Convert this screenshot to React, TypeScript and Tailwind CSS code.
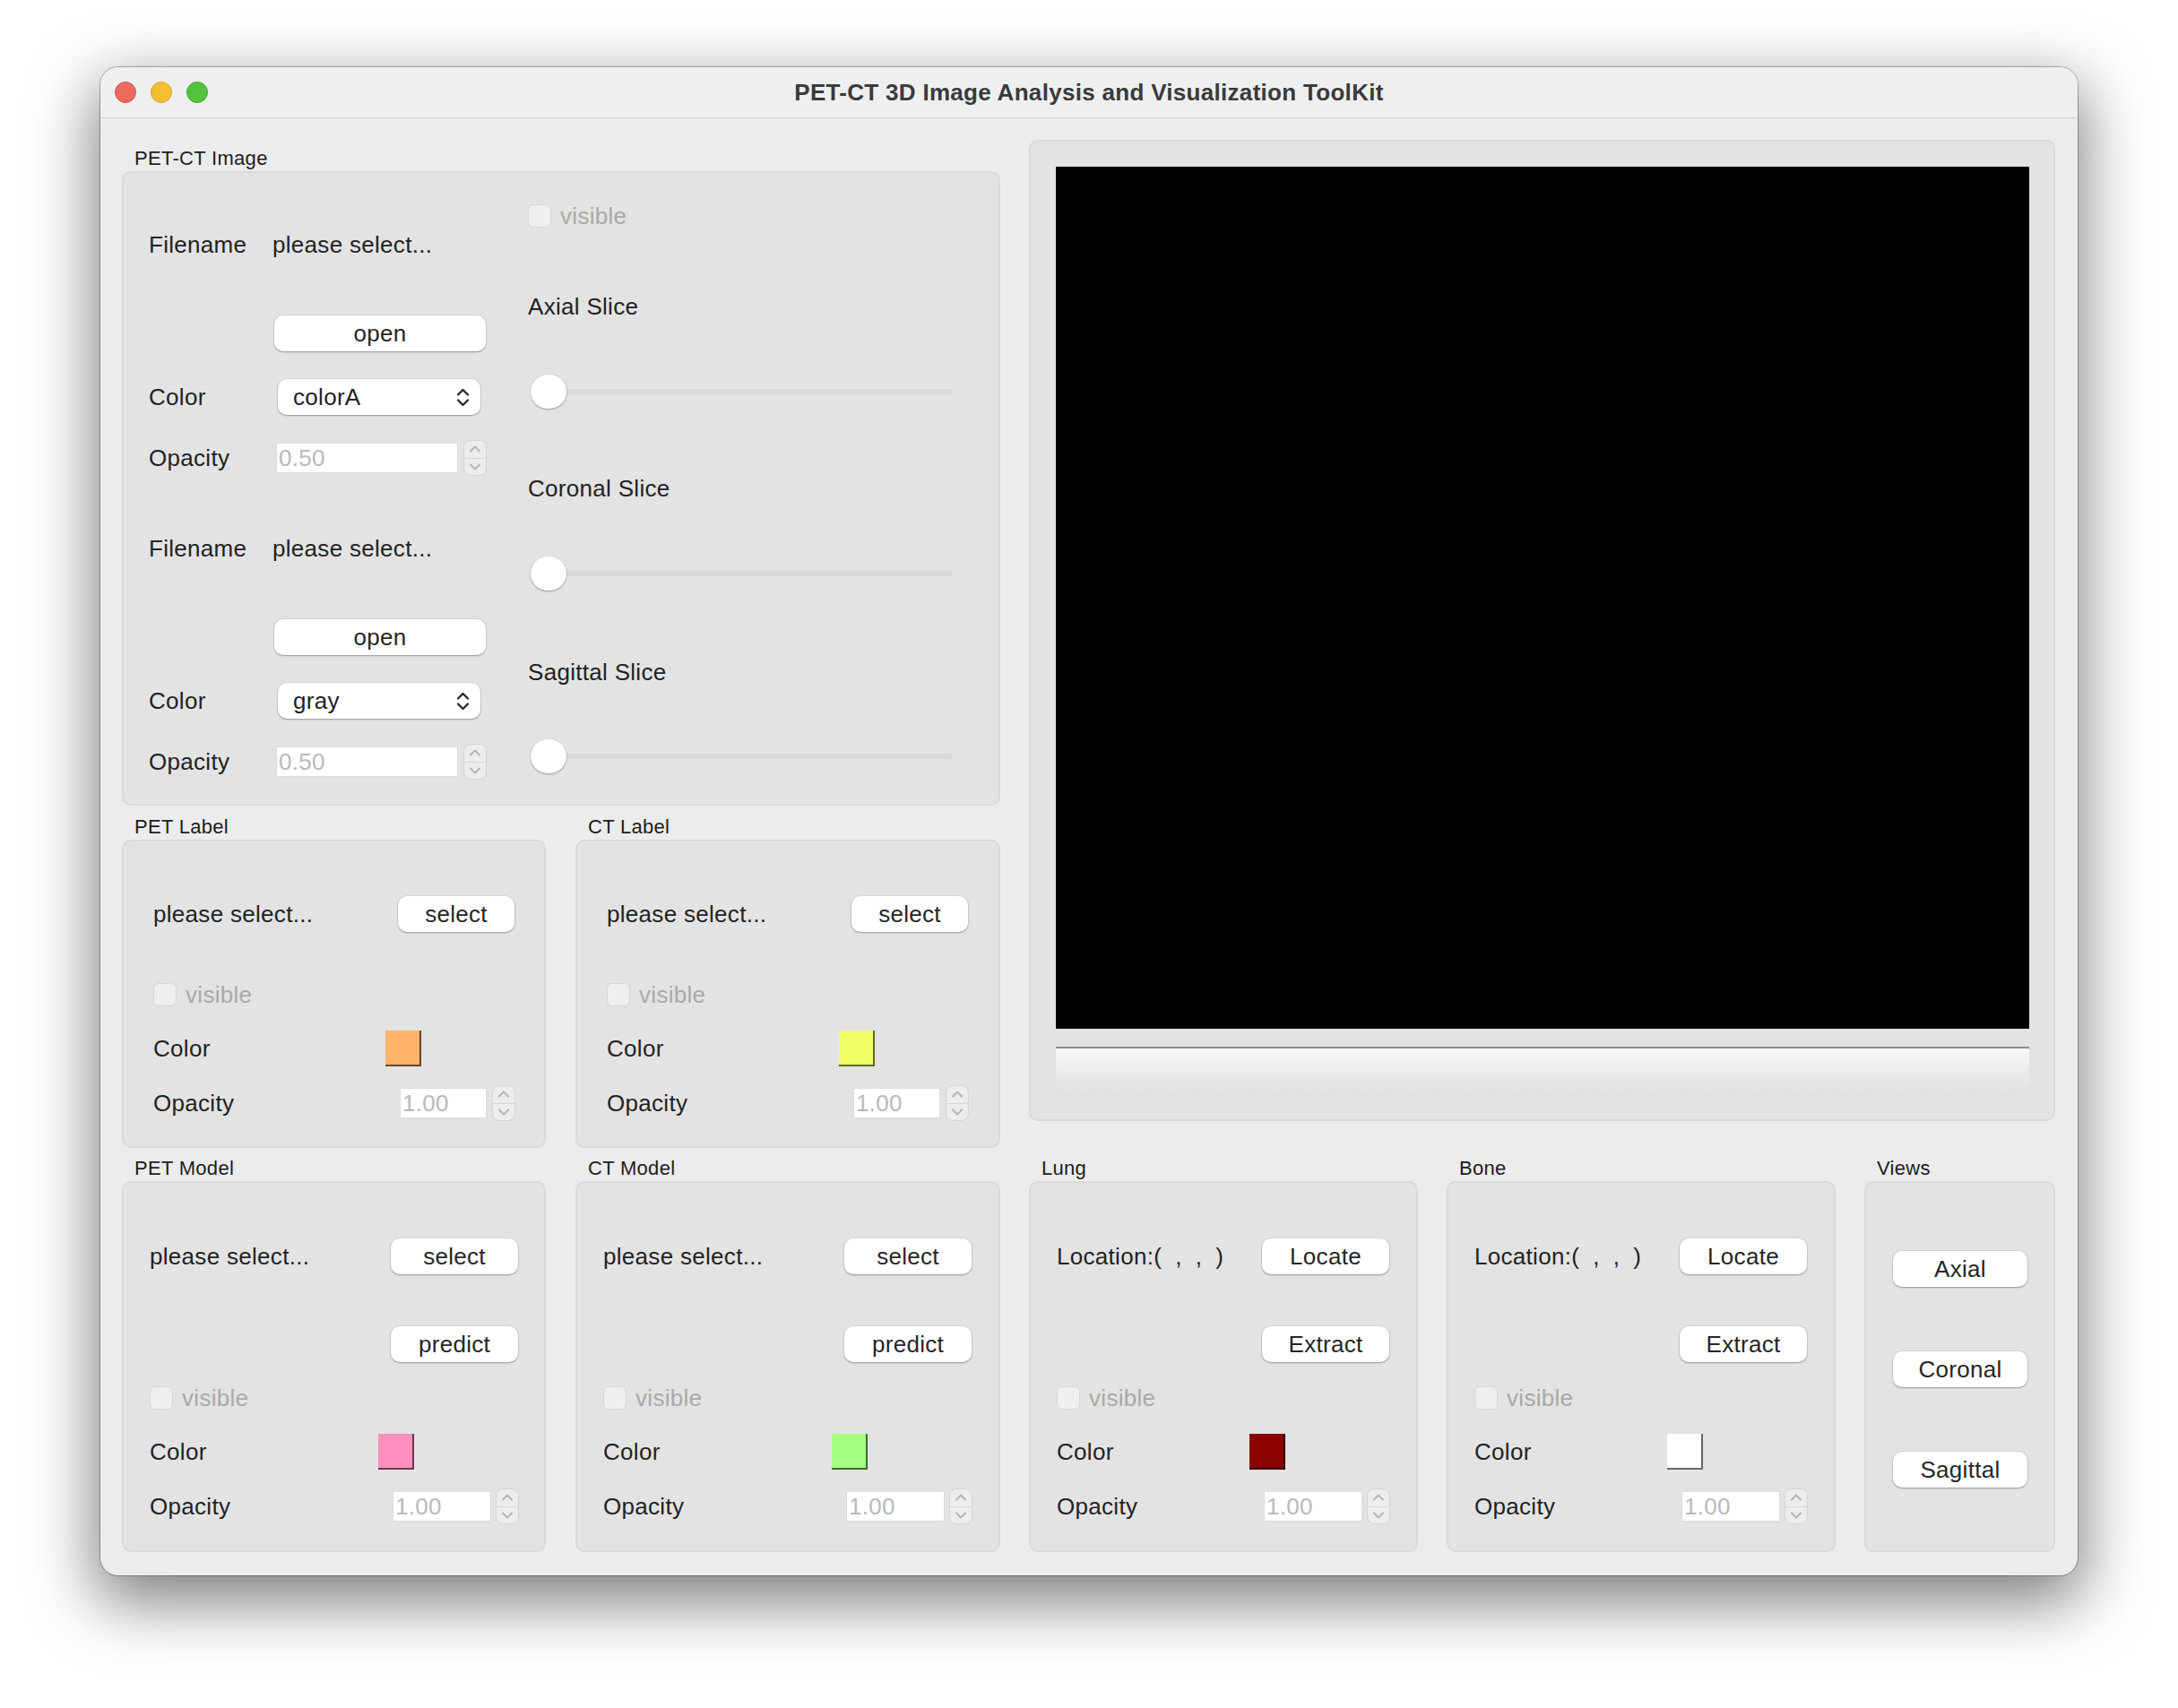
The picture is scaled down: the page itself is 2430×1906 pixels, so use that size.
import React from "react";

const btnShadow = "shadow-[0_1px_2px_rgba(0,0,0,0.3),0_0_0_1px_rgba(0,0,0,0.05)]";

const Text = ({ children, className = "" }: { children: React.ReactNode; className?: string }) => (
    <span className={`whitespace-pre text-[26px] leading-[30px] text-[#222222] ${className}`}>{children}</span>
);

const Button = ({ label, className = "" }: { label: string; className?: string }) => (
    <button
        type="button"
        className={`flex h-[40px] items-center justify-center rounded-[10px] bg-white text-[26px] text-[#262626] ${btnShadow} ${className}`}
    >
        {label}
    </button>
);

const Select = ({ value }: { value: string }) => (
    <div className={`flex h-[40px] w-[226px] items-center justify-between rounded-[10px] bg-white pl-[17px] pr-[12px] text-[26px] text-[#1f1f1f] ${btnShadow}`}>
        <span>{value}</span>
        <svg width="15" height="21" viewBox="0 0 15 21" fill="none" stroke="#2a2a2a" strokeWidth="2.4" strokeLinecap="round" strokeLinejoin="round">
            <path d="M2 7.5 7.5 2 13 7.5" />
            <path d="M2 13.5 7.5 19 13 13.5" />
        </svg>
    </div>
);

const Stepper = () => (
    <div className="flex h-[40px] w-[26px] flex-col overflow-hidden rounded-[8px] border border-[#d5d5d5] bg-[#ededed]">
        <div className="flex flex-1 items-center justify-center">
            <svg width="14" height="8" viewBox="0 0 14 8" fill="none" stroke="#b4b4b4" strokeWidth="2" strokeLinecap="round" strokeLinejoin="round">
                <path d="M2 6.5 7 1.5 12 6.5" />
            </svg>
        </div>
        <div className="h-px bg-[#d8d8d8]" />
        <div className="flex flex-1 items-center justify-center">
            <svg width="14" height="8" viewBox="0 0 14 8" fill="none" stroke="#b4b4b4" strokeWidth="2" strokeLinecap="round" strokeLinejoin="round">
                <path d="M2 1.5 7 6.5 12 1.5" />
            </svg>
        </div>
    </div>
);

const Spin = ({ value, fieldW, gap = "ml-[6px]" }: { value: string; fieldW: string; gap?: string }) => (
    <div className="flex items-center">
        <div className={`flex h-[34px] items-center border border-[#dcdcdc] bg-white pl-[2px] text-[26px] text-[#b9b9b9] ${fieldW}`}>
            {value}
        </div>
        <div className={gap}>
            <Stepper />
        </div>
    </div>
);

const Visible = () => (
    <div className="flex h-[40px] items-center">
        <div className="h-[26px] w-[26px] rounded-[6px] border border-[#d6d6d6] bg-[#efefef]" />
        <span className="ml-[10px] text-[26px] text-[#a9a9a9]">visible</span>
    </div>
);

const Swatch = ({ color }: { color: string }) => (
    <div className={`h-[40px] w-[40px] border-b-2 border-r-2 border-black/60 ${color}`} />
);

const Slider = () => (
    <div className="relative h-[40px] w-[474px]">
        <div className="absolute left-[3px] right-0 top-[17px] h-[6px] rounded-full bg-[#dadada]" />
        <div className="absolute left-[3px] top-[1px] h-[38px] w-[40px] rounded-full bg-white shadow-[0_1px_2px_rgba(0,0,0,0.3),0_0_0_1px_rgba(0,0,0,0.04)]" />
    </div>
);

const Group = ({
    title,
    width,
    box,
    children,
}: {
    title: string;
    width: string;
    box: string;
    children?: React.ReactNode;
}) => (
    <div className={width}>
        <div className="mb-[1px] pl-[14px] text-[22px] leading-[26px] text-[#1c1c1c]">{title}</div>
        <div className={`rounded-[10px] border-2 border-[#dadada] bg-[#e3e3e3] ${box}`}>{children}</div>
    </div>
);

const ImageBlock = ({ color }: { color: string }) => (
    <>
        <div className="flex h-[40px] items-center">
            <Text className="w-[138px]">Filename</Text>
            <Text>please select...</Text>
        </div>
        <div className="mt-[59px] flex h-[40px] items-center">
            <div className="w-[140px]" />
            <Button label="open" className="w-[236px]" />
        </div>
        <div className="mt-[31px] flex h-[40px] items-center">
            <Text className="w-[144px]">Color</Text>
            <Select value={color} />
        </div>
        <div className="mt-[28px] flex h-[40px] items-center">
            <Text className="w-[142px]">Opacity</Text>
            <Spin value="0.50" fieldW="w-[203px]" />
        </div>
    </>
);

const LabelPanel = ({ title, width, swatch }: { title: string; width: string; swatch: string }) => (
    <Group title={title} width={width} box="h-[344px] pl-[33px] pt-[61px]">
        <div className="flex h-[40px] items-center">
            <Text className="w-[259px]">please select...</Text>
            <Button label="select" className="ml-[14px] w-[130px]" />
        </div>
        <div className="mt-[50px]">
            <Visible />
        </div>
        <div className="mt-[20px] flex h-[40px] items-center">
            <Text className="w-[259px]">Color</Text>
            <Swatch color={swatch} />
        </div>
        <div className="mt-[21px] flex h-[40px] items-center">
            <Text className="w-[275px]">Opacity</Text>
            <Spin value="1.00" fieldW="w-[97px]" />
        </div>
    </Group>
);

const ModelPanel = ({
    title,
    width,
    text,
    col,
    b1,
    b2,
    swatch,
}: {
    title: string;
    width: string;
    text: string;
    col: string;
    b1: string;
    b2: string;
    swatch: string;
}) => (
    <Group title={title} width={width} box="h-[414px] pl-[29px] pt-[62px]">
        <div className="flex h-[40px] items-center">
            <Text className={col}>{text}</Text>
            <Button label={b1} className="ml-[14px] w-[142px]" />
        </div>
        <div className="mt-[58px] flex h-[40px] items-center">
            <div className={col} />
            <Button label={b2} className="ml-[14px] w-[142px]" />
        </div>
        <div className="mt-[20px]">
            <Visible />
        </div>
        <div className="mt-[20px] flex h-[40px] items-center">
            <Text className={col}>Color</Text>
            <Swatch color={swatch} />
        </div>
        <div className="mt-[21px] flex h-[40px] items-center">
            <Text className={col}>Opacity</Text>
            <div className="ml-[16px]">
                <Spin value="1.00" fieldW="w-[110px]" gap="ml-[5px]" />
            </div>
        </div>
    </Group>
);

const App = () => {
    return (
        <div className="h-[1906px] w-[2430px] bg-white pl-[112px] pt-[75px] font-['Liberation_Sans',Arial,sans-serif] tracking-[0.3px]">
            <div className="flex h-[1683px] w-[2206px] flex-col overflow-hidden rounded-[20px] bg-[#ececec] shadow-[0_24px_70px_6px_rgba(0,0,0,0.5),0_0_0_1px_rgba(0,0,0,0.28)]">
                {/* title bar */}
                <div className="grid h-[57px] grid-cols-[1fr_auto_1fr] items-center border-b border-[#d2d2d2] bg-[#eeeff0]">
                    <div className="flex items-center gap-[16px] pl-[16px]">
                        <div className="h-[24px] w-[24px] rounded-full border border-[#d5564b] bg-[#ee6a5e]" />
                        <div className="h-[24px] w-[24px] rounded-full border border-[#d8a23a] bg-[#f5bd2f]" />
                        <div className="h-[24px] w-[24px] rounded-full border border-[#45a834] bg-[#55c23d]" />
                    </div>
                    <div className="text-[26px] font-bold text-[#3a3a3a]">PET-CT 3D Image Analysis and Visualization ToolKit</div>
                    <div />
                </div>

                {/* content */}
                <div className="flex flex-col pl-[24px] pr-[25px] pt-[24px]">
                    <div className="flex items-start gap-[32px]">
                        <div className="mt-[8px] w-[980px]">
                            <Group title="PET-CT Image" width="w-[980px]" box="flex h-[708px] pl-[28px]">
                                <div className="w-[423px] pt-[60px]">
                                    <ImageBlock color="colorA" />
                                    <div className="mt-[61px]" />
                                    <ImageBlock color="gray" />
                                </div>
                                <div className="pt-[28px]">
                                    <Visible />
                                    <div className="mt-[61px] flex h-[40px] items-center">
                                        <Text>Axial Slice</Text>
                                    </div>
                                    <div className="mt-[55px]">
                                        <Slider />
                                    </div>
                                    <div className="mt-[68px] flex h-[40px] items-center">
                                        <Text>Coronal Slice</Text>
                                    </div>
                                    <div className="mt-[55px]">
                                        <Slider />
                                    </div>
                                    <div className="mt-[70px] flex h-[40px] items-center">
                                        <Text>Sagittal Slice</Text>
                                    </div>
                                    <div className="mt-[54px]">
                                        <Slider />
                                    </div>
                                </div>
                            </Group>
                            <div className="mt-[11px] flex gap-[33px]">
                                <LabelPanel title="PET Label" width="w-[473px]" swatch="bg-[#ffb469]" />
                                <LabelPanel title="CT Label" width="w-[474px]" swatch="bg-[#f0ff68]" />
                            </div>
                        </div>

                        {/* viewer */}
                        <div className="h-[1095px] w-[1145px] rounded-[10px] border-2 border-[#dadada] bg-[#e3e3e3] pb-[27px] pl-[28px] pr-[27px] pt-[28px]">
                            <div className="h-[962px] bg-black" />
                            <div className="mt-[20px] h-[54px] border-t-2 border-[#8a8a8a] bg-linear-to-b from-[#f8f8f8] to-[#e0e0e0]" />
                        </div>
                    </div>

                    <div className="mt-[10px] flex gap-[32px]">
                        <div className="flex gap-[33px]">
                            <ModelPanel title="PET Model" width="w-[473px]" text="please select..." col="w-[255px]" b1="select" b2="predict" swatch="bg-[#ff8fbc]" />
                            <ModelPanel title="CT Model" width="w-[474px]" text="please select..." col="w-[255px]" b1="select" b2="predict" swatch="bg-[#a4ff80]" />
                        </div>
                        <ModelPanel title="Lung" width="w-[434px]" text="Location:(  ,  ,  )" col="w-[215px]" b1="Locate" b2="Extract" swatch="bg-[#8b0000]" />
                        <ModelPanel title="Bone" width="w-[434px]" text="Location:(  ,  ,  )" col="w-[215px]" b1="Locate" b2="Extract" swatch="bg-white" />
                        <Group title="Views" width="w-[213px]" box="flex h-[414px] flex-col gap-[72px] pl-[30px] pt-[76px]">
                            <Button label="Axial" className="w-[150px]" />
                            <Button label="Coronal" className="w-[150px]" />
                            <Button label="Sagittal" className="w-[150px]" />
                        </Group>
                    </div>
                </div>
            </div>
        </div>
    );
};

export default App;
